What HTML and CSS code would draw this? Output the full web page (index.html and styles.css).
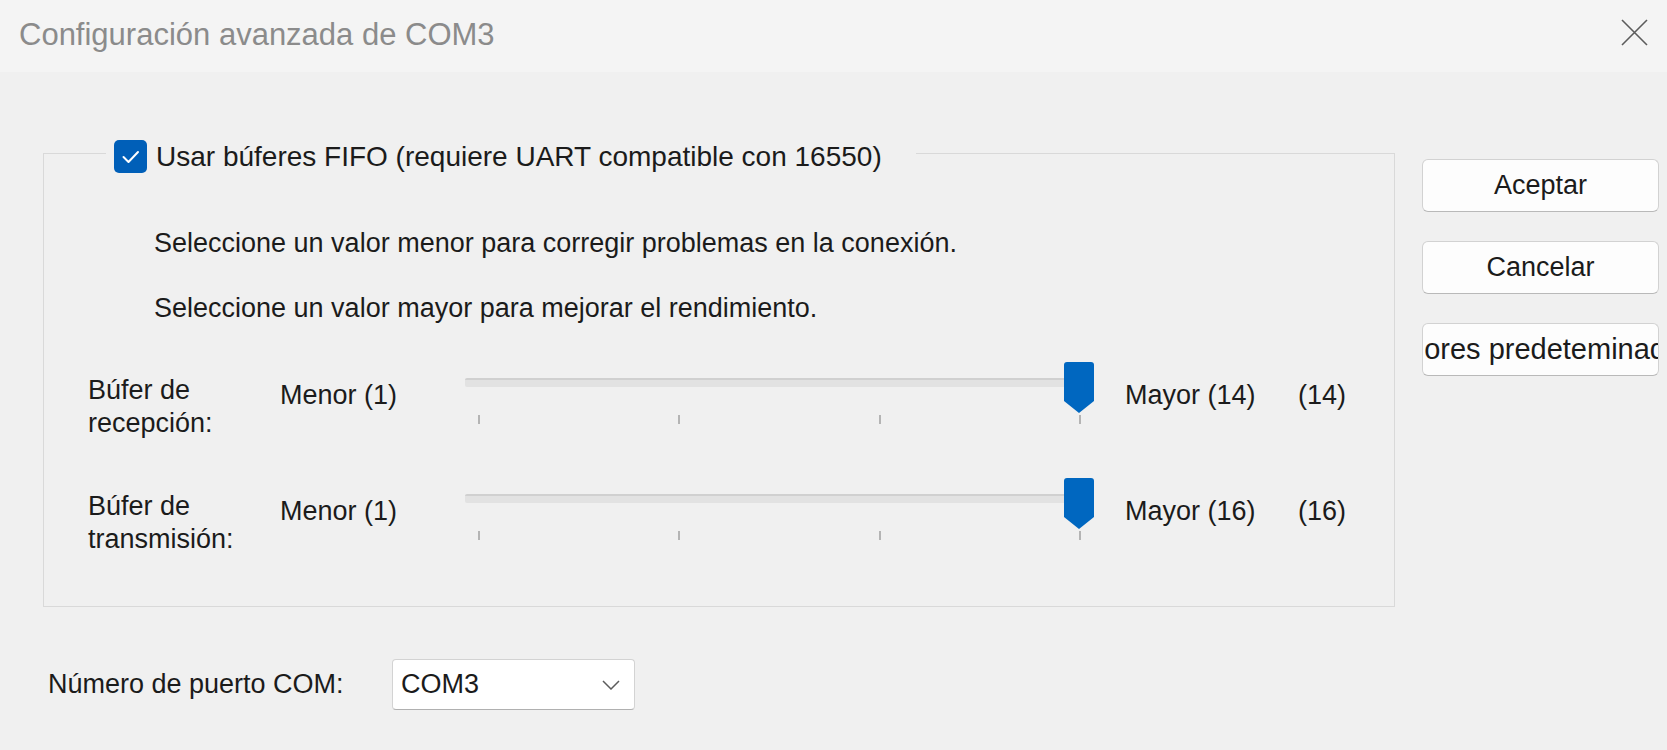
FILE: index.html
```html
<!DOCTYPE html>
<html lang="es">
<head>
<meta charset="utf-8">
<title>Configuración avanzada de COM3</title>
<link rel="stylesheet" href="styles.css">
</head>
<body>
<div class="window">
  <header class="titlebar">
    <span class="title">Configuración avanzada de COM3</span>
    <svg class="close" width="27" height="27" viewBox="0 0 27 27"><path d="M1 1 L26 26 M26 1 L1 26" stroke="#5c5c5c" stroke-width="1.6" fill="none"/></svg>
  </header>
  <main class="main">
    <section class="left">
      <fieldset class="group">
        <legend class="legend">
          <svg class="check" width="33" height="33" viewBox="0 0 33 33"><rect x="0" y="0" width="33" height="33" rx="5" fill="#005fb8"/><path d="M9.5 17 L14.5 22 L24 12" stroke="#ffffff" stroke-width="2" fill="none" stroke-linecap="round" stroke-linejoin="round"/></svg>
          <span>Usar búferes FIFO (requiere UART compatible con 16550)</span>
        </legend>
        <div class="group-body">
          <p class="hint first">Seleccione un valor menor para corregir problemas en la conexión.</p>
          <p class="hint second">Seleccione un valor mayor para mejorar el rendimiento.</p>
          <div class="row">
            <div class="row-label">Búfer de<br>recepción:</div>
            <div class="row-min">Menor (1)</div>
            <div class="slider">
              <div class="track"></div>
              <div class="ticks"><i></i><i></i><i></i><i></i></div>
              <svg class="thumb" width="30" height="51" viewBox="0 0 30 51"><path d="M3 0 H27 Q30 0 30 3 V39 L15 51 L0 39 V3 Q0 0 3 0 Z" fill="#0067c0"/></svg>
            </div>
            <div class="row-max">Mayor (14)</div>
            <div class="row-val">(14)</div>
          </div>
          <div class="row">
            <div class="row-label">Búfer de<br>transmisión:</div>
            <div class="row-min">Menor (1)</div>
            <div class="slider">
              <div class="track"></div>
              <div class="ticks"><i></i><i></i><i></i><i></i></div>
              <svg class="thumb" width="30" height="51" viewBox="0 0 30 51"><path d="M3 0 H27 Q30 0 30 3 V39 L15 51 L0 39 V3 Q0 0 3 0 Z" fill="#0067c0"/></svg>
            </div>
            <div class="row-max">Mayor (16)</div>
            <div class="row-val">(16)</div>
          </div>
        </div>
      </fieldset>
      <div class="port">
        <span class="port-label">Número de puerto COM:</span>
        <div class="combo">
          <span>COM3</span>
          <svg width="18" height="10" viewBox="0 0 18 10"><path d="M1 1 L9 9 L17 1" stroke="#5c5c5c" stroke-width="1.5" fill="none"/></svg>
        </div>
      </div>
    </section>
    <aside class="buttons">
      <button class="btn">Aceptar</button>
      <button class="btn">Cancelar</button>
      <button class="btn clip"><span>Valores predeteminados</span></button>
    </aside>
  </main>
</div>
</body>
</html>
```
FILE: styles.css
```css
* { box-sizing: border-box; }
html, body {
  margin: 0;
  padding: 0;
}
body {
  width: 1667px;
  height: 750px;
  overflow: hidden;
  background: #f0f0f0;
  font-family: "Liberation Sans", Arial, sans-serif;
  font-size: 27px;
  line-height: 33px;
  color: #1b1b1b;
}
.window {
  display: flex;
  flex-direction: column;
  height: 750px;
}
.titlebar {
  height: 72px;
  flex: none;
  background: #f4f4f4;
  display: flex;
  align-items: center;
  justify-content: space-between;
  padding: 0 19px 4px 19px;
}
.title {
  font-size: 31px;
  color: #8b8b8b;
}
.close { display: block; margin-top: -4px; }
.main {
  display: flex;
  flex: 1;
}
.left {
  width: 1352px;
  margin-left: 43px;
  padding-top: 61px;
}
.group {
  margin: 0;
  padding: 0 0 12px 0;
  border: 1px solid #d9d9d9;
  min-inline-size: 0;
}
.legend {
  margin-left: 62px;
  padding: 7px 34px 0 8px;
  display: flex;
  align-items: center;
  gap: 9px;
  font-size: 28px;
}
.check { display: block; flex: none; }
.group-body {
  padding-top: 54px;
}
.hint {
  margin: 0;
  padding-left: 110px;
}
.hint.second { margin-top: 32px; }
.row {
  height: 116px;
  display: grid;
  grid-template-columns: 192px 185px 660px 173px auto;
  align-items: start;
  padding-left: 44px;
}
.hint.second + .row { margin-top: 37px; }
.row-label { margin-top: 12px; }
.row-min, .row-max, .row-val { margin-top: 17px; }
.slider {
  position: relative;
  width: 630px;
  height: 64px;
}
.track {
  margin-top: 16px;
  width: 620px;
  height: 9px;
  background: #e2e2e2;
  border-top: 2px solid #d0d0d0;
  border-radius: 2px;
}
.ticks {
  margin-top: 28px;
  display: flex;
  justify-content: space-between;
  padding: 0 14px 0 13px;
}
.ticks i {
  display: block;
  width: 2px;
  height: 9px;
  background: #b4b4b4;
}
.thumb {
  position: absolute;
  left: 599px;
  top: 0;
}
.port {
  display: flex;
  align-items: center;
  margin-top: 52px;
  padding-left: 5px;
}
.port-label {
  width: 344px;
  flex: none;
}
.combo {
  width: 243px;
  height: 51px;
  background: #ffffff;
  border: 1px solid #d3d3d3;
  border-bottom-color: #b0b0b0;
  border-radius: 4px;
  display: flex;
  align-items: center;
  justify-content: space-between;
  padding: 0 14px 0 8px;
}
.combo svg { display: block; }
.buttons {
  width: 237px;
  margin-left: 27px;
  padding-top: 87px;
  display: flex;
  flex-direction: column;
  gap: 29px;
}
.btn {
  height: 53px;
  width: 237px;
  background: #fdfdfd;
  border: 1px solid #d2d2d2;
  border-bottom-color: #b9b9b9;
  border-radius: 6px;
  font-family: "Liberation Sans", Arial, sans-serif;
  font-size: 27px;
  color: #1b1b1b;
  padding: 0 0 0 0;
  display: flex;
  align-items: center;
  justify-content: center;
  overflow: hidden;
}
.btn.clip span {
  white-space: nowrap;
  flex: none;
  font-size: 29px;
}
```
